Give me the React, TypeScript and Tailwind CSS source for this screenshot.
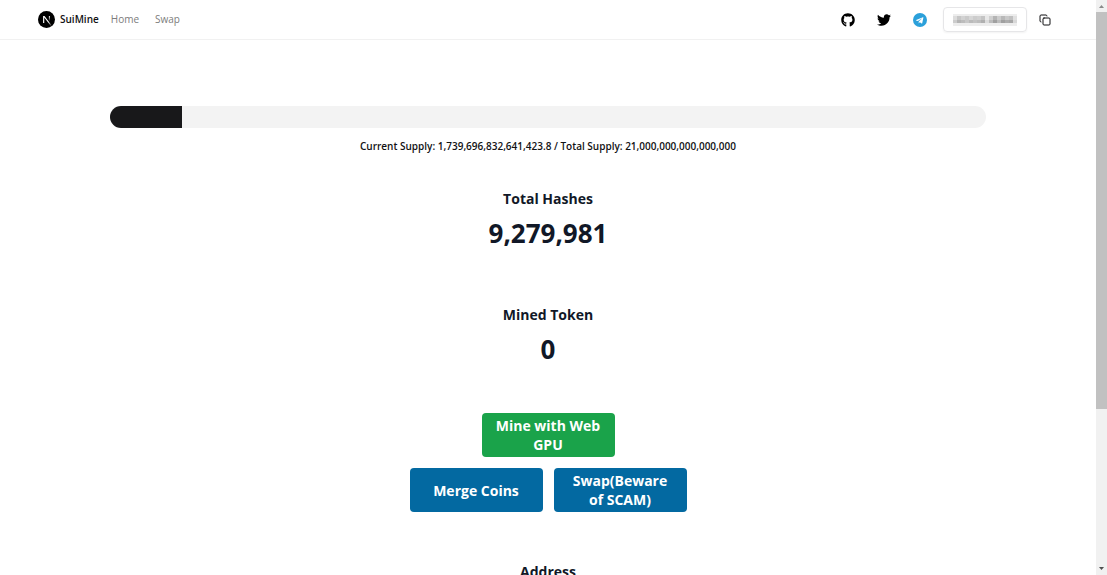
import type { ReactNode } from "react";
import { Copy } from "lucide-react";
import { FaGithub, FaTwitter } from "react-icons/fa";

const CURRENT_SUPPLY = 1739696832641423.8;
const TOTAL_SUPPLY = 21000000000000000;

const maskTop = ["#dcdcdc", "#c6c6c6", "#d2d2d2", "#cacaca", "#d6d6d6", "#cccccc", "#d0d0d0", "#c4c4c4", "#e8e8e8", "#d0d0d0", "#b4b4b4", "#cccccc", "#b8b8b8", "#c8c8c8", "#c0c0c0", "#e0e0e0"];
const maskBottom = ["#cccccc", "#b4b4b4", "#bcbcbc", "#c8c8c8", "#bababa", "#c2c2c2", "#bcbcbc", "#b0b0b0", "#dcdcdc", "#bcbcbc", "#a0a0a0", "#bcbcbc", "#a0a0a0", "#acacac", "#a6a6a6", "#d8d8d8"];

function NextLogo() {
   return (
      <svg className="h-[17px] w-[17px]" viewBox="0 0 180 180">
         <defs>
            <linearGradient id="diag" x1="109" y1="116" x2="144" y2="160" gradientUnits="userSpaceOnUse">
               <stop stopColor="#fff" />
               <stop offset="1" stopColor="#fff" stopOpacity="0" />
            </linearGradient>
            <linearGradient id="stem" x1="121" y1="54" x2="121" y2="107" gradientUnits="userSpaceOnUse">
               <stop stopColor="#fff" />
               <stop offset="1" stopColor="#fff" stopOpacity="0" />
            </linearGradient>
         </defs>
         <circle cx="90" cy="90" r="90" fill="#000" />
         <path
            d="M149.5 157.5 69.1 54H54v72h12.1V69.4l73.9 95.5c3.3-2.2 6.5-4.7 9.5-7.4z"
            fill="url(#diag)"
         />
         <rect x="115" y="54" width="12" height="72" fill="url(#stem)" />
      </svg>
   );
}

function TelegramIcon() {
   return (
      <svg className="h-[14px] w-[14px]" viewBox="0 0 24 24">
         <circle cx="12" cy="12" r="12" fill="#2ba0da" />
         <path
            d="M5.4 11.9 17 7.3c.6-.2 1 .1.8.9l-2 9.2c-.1.7-.6.8-1.1.5l-3-2.2-1.4 1.4c-.2.2-.3.3-.6.3l.2-3 5.5-5c.2-.2 0-.3-.3-.1L8.3 13.6l-2.9-.9c-.7-.2-.7-.6 0-.8z"
            fill="#fff"
         />
      </svg>
   );
}

function MaskedAddress() {
   return (
      <svg className="h-3 w-16" viewBox="0 0 64 12" shapeRendering="crispEdges">
         <rect width="64" height="12" fill="#ededed" />
         {maskTop.map((fill, i) => (
            <rect key={i} x={i * 4} y="2" width="4" height="4" fill={fill} />
         ))}
         {maskBottom.map((fill, i) => (
            <rect key={i} x={i * 4} y="6" width="4" height="3" fill={fill} />
         ))}
      </svg>
   );
}

function Header() {
   return (
      <header className="flex h-10 items-center justify-between border-b border-[#f1f1f1] pr-11 pl-[38px]">
         <nav className="flex items-center gap-3 text-[10px] text-[#7c7c7c]">
            <a href="#" className="flex items-center gap-[5px] font-semibold text-[#111113]">
               <NextLogo />
               SuiMine
            </a>
            <div className="flex gap-4">
               <a href="#home">Home</a>
               <a href="#swap">Swap</a>
            </div>
         </nav>
         <div className="flex items-center">
            <div className="mr-4 flex items-center gap-[22px] text-black">
               <a href="#github" aria-label="GitHub">
                  <FaGithub className="h-[14px] w-[14px]" />
               </a>
               <a href="#twitter" aria-label="Twitter">
                  <FaTwitter className="h-[14px] w-[14px]" />
               </a>
               <a href="#telegram" aria-label="Telegram">
                  <TelegramIcon />
               </a>
            </div>
            <button
               aria-label="Wallet"
               className="flex h-[25px] w-[84px] items-center justify-center rounded border border-[#e6e6e8] shadow-xs"
            >
               <MaskedAddress />
            </button>
            <button aria-label="Copy address" className="ml-[11px] flex h-[14px] w-[14px] items-center justify-center text-[#111113]">
               <Copy className="h-[12px] w-[12px]" />
            </button>
         </div>
      </header>
   );
}

function Stat({ label, value }: { label: string; value?: string }) {
   return (
      <section className="flex flex-col items-center text-[#111827]">
         <h2 className="text-[14px] leading-[22px] font-bold">{label}</h2>
         {value && <p className="mt-[6px] text-[26px] leading-[34px] font-bold">{value}</p>}
      </section>
   );
}

function ActionButton({ color, children }: { color: string; children: ReactNode }) {
   return (
      <button
         className={`flex h-11 w-[133px] items-center justify-center rounded px-3 text-center text-[14px] leading-[19px] font-bold text-white ${color}`}
      >
         {children}
      </button>
   );
}

function Scrollbar() {
   return (
      <div className="flex w-[11px] shrink-0 flex-col items-center bg-[#f1f1f1]" aria-hidden="true">
         <svg className="h-3 w-[11px] shrink-0" viewBox="0 0 11 12">
            <path d="M3 8l2.500-3L8 8z" fill="#8a8a8a" />
         </svg>
         <div className="h-[69%] w-full bg-[#c1c1c1]" />
         <svg className="mt-auto h-3 w-[11px] shrink-0" viewBox="0 0 11 12">
            <path d="M3 4l2.500 3L8 4z" fill="#505050" />
         </svg>
      </div>
   );
}

export default function App() {
   const percent = (CURRENT_SUPPLY / TOTAL_SUPPLY) * 100;

   return (
      <div className="flex h-screen overflow-hidden bg-white font-['Open_Sans',sans-serif]">
         <div className="min-w-0 flex-1 overflow-hidden">
            <Header />
            <main className="flex flex-col items-center pt-[66px]">
               <div className="h-[22px] w-4/5 overflow-hidden rounded-full bg-[#f3f3f3]">
                  <div className="h-full bg-[#18181a]" style={{ width: `${percent}%` }} />
               </div>
               <p className="mt-[10px] text-[10px] leading-4 font-semibold text-[#111113]">
                  Current Supply: {CURRENT_SUPPLY.toLocaleString("en-US", { maximumFractionDigits: 1 })} / Total
                  Supply: {TOTAL_SUPPLY.toLocaleString("en-US")}
               </p>

               <div className="mt-[34px] flex flex-col gap-[54px]">
                  <Stat label="Total Hashes" value="9,279,981" />
                  <Stat label="Mined Token" value="0" />
               </div>

               <div className="mt-[47px] flex flex-col items-center gap-[11px]">
                  <ActionButton color="bg-[#1aa34a]">Mine with Web GPU</ActionButton>
                  <div className="flex gap-[11px]">
                     <ActionButton color="bg-[#0369a1]">Merge Coins</ActionButton>
                     <ActionButton color="bg-[#0369a1]">Swap(Beware of SCAM)</ActionButton>
                  </div>
               </div>

               <div className="mt-[49px]">
                  <Stat label="Address" />
               </div>
            </main>
         </div>
         <Scrollbar />
      </div>
   );
}
